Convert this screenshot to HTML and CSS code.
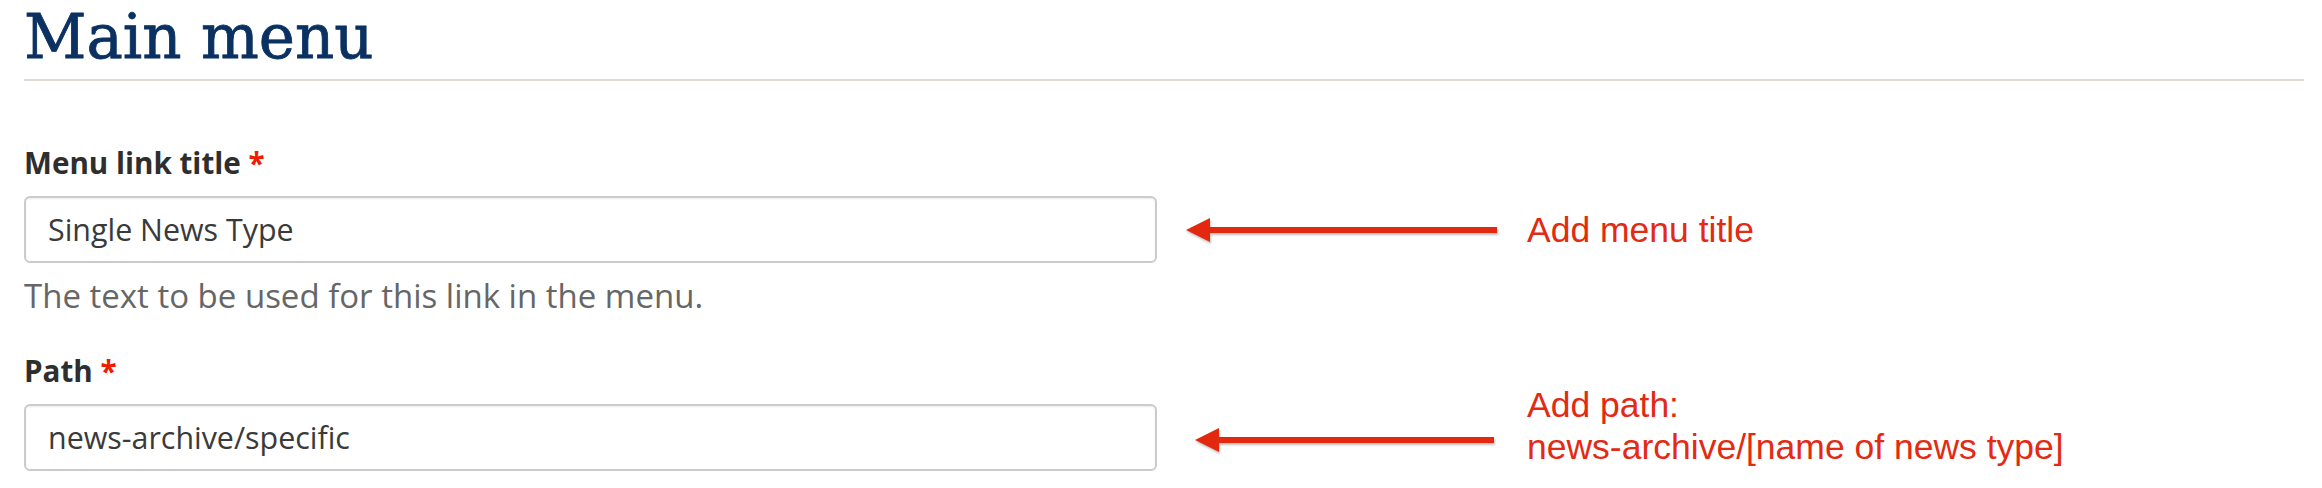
FILE: index.html
```html
<!DOCTYPE html>
<html lang="en">
<head>
  <meta charset="UTF-8">
  <title>Main menu</title>
  <link rel="stylesheet" href="styles.css">
</head>
<body>
  <main class="page">
    <h1 class="page-title">Main menu</h1>

    <!-- Menu link title -->
    <div class="form-item">
      <label class="form-label" for="title">Menu link title <span class="form-required">*</span></label>
      <input class="form-text" id="title" type="text" value="Single News Type">
      <div class="description">The text to be used for this link in the menu.</div>
    </div>

    <!-- Path -->
    <div class="form-item">
      <label class="form-label" for="path">Path <span class="form-required">*</span></label>
      <input class="form-text" id="path" type="text" value="news-archive/specific">
    </div>

    <!-- Annotations drawn over the form -->
    <svg class="note-arrow arrow-title" width="318" height="34" viewBox="0 0 318 34">
      <rect x="22" y="14" width="291" height="6" fill="#e2290f"/>
      <polygon points="2,17 26,5 26,29" fill="#e2290f"/>
    </svg>
    <p class="note-text text-title">Add menu title</p>

    <svg class="note-arrow arrow-path" width="306" height="34" viewBox="0 0 306 34">
      <rect x="22" y="14" width="279" height="6" fill="#e2290f"/>
      <polygon points="2,17 26,5 26,29" fill="#e2290f"/>
    </svg>
    <p class="note-text text-path">Add path:<br>news-archive/[name of news type]</p>
  </main>
</body>
</html>
```

FILE: styles.css
```css
/* Page */
body {
  margin: 0;
  background: #fff;
  font-family: 'Open Sans', 'Liberation Sans', sans-serif;
}

.page {
  position: relative;
  padding: 0 18px 0 24px;
  min-height: 488px;
  box-sizing: border-box;
}

/* Title with underline */
.page-title {
  margin: 0;
  padding-bottom: 5px;
  font-family: 'DejaVu Serif', serif;
  font-size: 61px;
  font-weight: normal;
  line-height: 74px;
  color: #0b3162;
  -webkit-text-stroke: 0.8px #0b3162;
  border-bottom: 2px solid #dedad3;
}

/* Form items */
.form-item {
  margin-top: 60px;
}

.form-item + .form-item {
  margin-top: 31px;
}

.form-label {
  display: block;
  font-size: 29.6px;
  font-weight: bold;
  line-height: 44px;
  color: #2e2e2e;
}

.form-required {
  color: #f21a00;
}

.form-text {
  display: block;
  width: 1133px;
  height: 67px;
  margin-top: 11px;
  padding: 0 22px;
  box-sizing: border-box;
  font-family: 'Open Sans', sans-serif;
  font-size: 30.4px;
  color: #3a3a3a;
  background: #fff;
  border: 2px solid #cbcbcb;
  border-radius: 6px;
  box-shadow: inset 0 1px 2px rgba(0, 0, 0, 0.08);
  outline: none;
}

.description {
  margin-top: 11px;
  font-size: 33px;
  line-height: 44px;
  color: #666;
}

/* Annotations */
.note-arrow {
  position: absolute;
  filter: drop-shadow(1px 2px 1px rgba(0, 0, 0, 0.25));
}

.arrow-title {
  left: 1184px;
  top: 213px;
}

.arrow-path {
  left: 1193px;
  top: 423px;
}

.note-text {
  position: absolute;
  left: 1527px;
  margin: 0;
  font-family: 'Liberation Sans', Arial, sans-serif;
  font-size: 35.5px;
  line-height: 42px;
  color: #e32a12;
}

.text-title {
  top: 209px;
}

.text-path {
  top: 384px;
}
```
